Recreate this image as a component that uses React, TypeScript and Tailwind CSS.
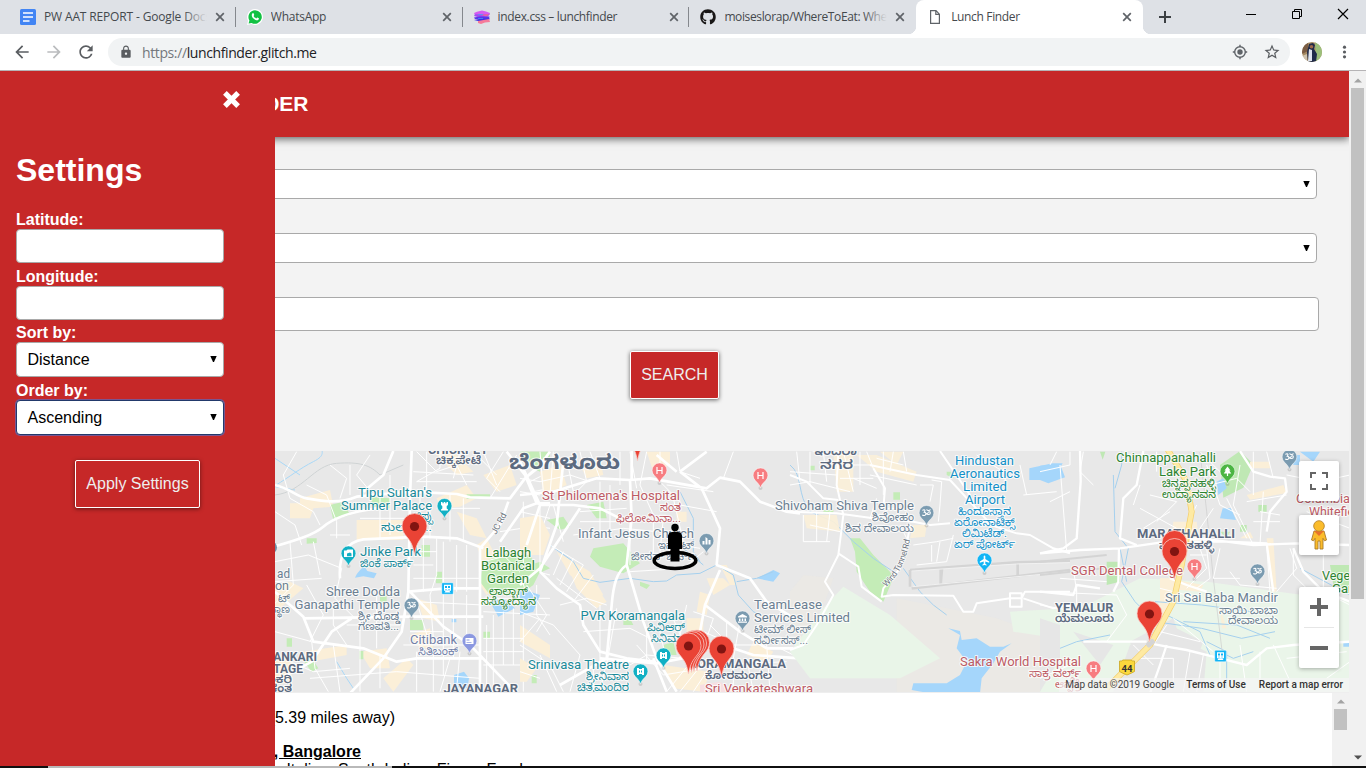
import React from "react";
import { FaGithub } from "react-icons/fa";
import { MdArrowBack, MdArrowForward, MdRefresh, MdLock, MdStarBorder } from "react-icons/md";

const UI = "font-['Open_Sans','Noto_Sans',sans-serif]";

function CloseX() {
  return (
    <svg className="h-[10px] w-[10px] shrink-0" viewBox="0 0 10 10">
      <path d="M1.2 1.2 8.8 8.8M8.8 1.2 1.2 8.8" stroke="#5f6368" strokeWidth="1.7" />
    </svg>
  );
}

function DocsIcon() {
  return (
    <svg className="h-4 w-4" viewBox="0 0 16 16">
      <rect width="16" height="16" rx="1.5" fill="#4285f4" />
      <path d="M3 4h10M3 8h10M3 12h6.500" stroke="#fff" strokeWidth="1.7" />
    </svg>
  );
}

function WhatsIcon() {
  return (
    <svg className="h-4 w-4" viewBox="0 0 16 16">
      <path d="M8 0a8 8 0 1 1-3.700 15.100L0 16l1-4.200A8 8 0 0 1 8 0Z" fill="#fff" />
      <path d="M8 1.200a6.800 6.800 0 1 1-3.400 12.700L1.600 14.500l.8-3A6.800 6.800 0 0 1 8 1.200Z" fill="#12c143" />
      <path d="M5.600 4.300c.5-.4.9-.2 1.100.3l.5 1.200c.1.400-.5.900-.6 1.100.6 1.300 1.500 2 2.700 2.500.3-.2.700-1 1.100-.9l1.400.7c.5.300-.1 1.400-.6 1.800-1.200.8-3.200 0-4.700-1.400C4.900 8 4 5.700 5.600 4.300Z" fill="#fff" />
    </svg>
  );
}

function GlitchIcon() {
  return (
    <svg className="h-4 w-4" viewBox="0 0 16 16">
      <path d="M0 4l3-1.200L8 1.500l4 1 4 1.500-.5 2H1Z" fill="#d65cf0" />
      <path d="M1 5.200h14.500L14 7.500 5 8.500 0 7Z" fill="#a04df0" />
      <path d="M6 5.800l9-.8-2 2.500Z" fill="#f0629c" />
      <path d="M0 8.500l6-1 9.500 0L15 10H1Z" fill="#5a35ea" />
      <path d="M0 11l5-1 11-.5-2 2.500H4Z" fill="#4030e0" />
      <path d="M4 12l11-2 1 3-5 .5-4 1.500-3-1Z" fill="#f57a9a" />
      <path d="M4 5.500h5M4 9.500h5" stroke="#2fb4ff" strokeWidth=".6" />
    </svg>
  );
}

function FileIcon() {
  return (
    <svg className="ml-[2px] h-4 w-3" viewBox="0 0 12 16">
      <path d="M1.600 1.600h5.400l3.400 3.600v9.200H1.600Z M6.800 1.600v3.800h3.600" fill="none" stroke="#5f6368" strokeWidth="1.200" />
    </svg>
  );
}

interface TabProps {
  icon: React.ReactNode;
  title: string;
  sep?: boolean;
  active?: boolean;
  fade?: boolean;
  spacing: string;
}

function Tab({ icon, title, sep, active, fade, spacing }: TabProps) {
  return (
    <div className={"relative flex h-[34px] w-[226.8px] shrink-0 items-center pl-[11px] " + (active ? "rounded-t-lg bg-white" : "")}>
      {sep && <div className="absolute left-[-1px] top-[7px] h-[20px] w-px bg-[#85888d]" />}
      {active && (
        <>
          <div className="absolute bottom-0 left-[-8px] h-2 w-2 bg-[radial-gradient(circle_at_0_0,#dee1e6_8px,#fff_8.500px)]" />
          <div className="absolute bottom-0 right-[-8px] h-2 w-2 bg-[radial-gradient(circle_at_100%_0,#dee1e6_8px,#fff_8.500px)]" />
        </>
      )}
      <div className="flex w-6 shrink-0">{icon}</div>
      <div className="relative w-[163px] shrink-0 overflow-hidden">
        <div className={"whitespace-nowrap text-[12px] leading-4 text-[#45494d] " + spacing}>{title}</div>
        {fade && <div className="absolute right-0 top-0 h-4 w-6 bg-linear-to-r from-[#dee1e600] to-[#dee1e6]" />}
      </div>
      <div className="ml-[8px] flex"><CloseX /></div>
    </div>
  );
}

function Select({ label, className }: { label?: string; className: string }) {
  return (
    <div className={"flex items-center justify-between rounded border bg-white pl-[10.500px] text-[16px] text-black " + className}>
      <span>{label}</span>
      <svg className="mb-[1px] h-[6px] w-[7px] shrink-0" viewBox="0 0 7 6"><path d="M.3 0h6.400L4 6H3Z" fill="#000" /></svg>
    </div>
  );
}

/* ---------- map ---------- */

type Label = [string, number, number, number, string, number, number?];

const GRAY = "#6b7f92";
const BOLD = "#5d6b80";
const RED = "#bd5b65";
const TEAL = "#1a8a99";
const GREEN = "#2c8330";
const BLUE = "#1390c8";
const VIO = "#7180a8";

/* text, left, right, baseline, colour, size, weight */
const labels: Label[] = [
  ["CHICKPET", 428, 488, 454, BOLD, 12, 700],
  ["ಚಿಕ್ಕಪೇಟೆ", 436, 481, 464, BOLD, 11, 600],
  ["ಬೆಂಗಳೂರು", 509, 620, 469, BOLD, 20, 700],
  ["Tipu Sultan's", 358, 432, 497, TEAL, 13],
  ["Summer Palace", 341, 432, 510, TEAL, 13],
  ["ಟಿಪ್ಪು", 413, 433, 520, TEAL, 11],
  ["ಸುಲ್ತಾನ...", 381, 432, 531, TEAL, 11],
  ["Jinke Park", 360, 421, 556, TEAL, 13],
  ["ಜಿಂಕೆ ಪಾರ್ಕ್", 360, 413, 567, TEAL, 11],
  ["ad", 277, 290, 578, GRAY, 13],
  ["on", 275, 289, 590, GRAY, 13],
  ["ಟ್", 278, 290, 602, GRAY, 11],
  ["ಸ್ಥಾಣ", 269, 290, 613, GRAY, 11],
  ["Shree Dodda", 326, 400, 596, GRAY, 13],
  ["Ganapathi Temple", 294.500, 400, 609, GRAY, 13],
  ["ಶ್ರೀ ದೊಡ್ಡ", 358, 400, 620, GRAY, 11],
  ["ಗಣಪತಿ...", 358, 399, 630, GRAY, 11],
  ["Citibank", 410, 457, 644, VIO, 13],
  ["ಸಿತಿಬಂಕ್", 418, 458, 655, VIO, 11],
  ["SHANKARI", 257, 317, 660.500, BOLD, 12, 700],
  ["COTTAGE", 250, 303, 672.500, BOLD, 12, 700],
  ["ಶಂಕರಿ", 260, 292, 683, BOLD, 11, 600],
  ["ಕಂತ", 270, 292, 692, BOLD, 11, 600],
  ["JAYANAGAR", 443.500, 518, 693, BOLD, 12, 700],
  ["Lalbagh", 485.500, 531, 557, GREEN, 13],
  ["Botanical", 481, 535, 570, GREEN, 13],
  ["Garden", 487, 529, 583, GREEN, 13],
  ["ಲಾಲ್ಬಾಗ್", 489, 528, 595, GREEN, 11],
  ["ಸಸ್ಯೋದ್ಯಾನ", 481, 536, 605, GREEN, 11],
  ["St Philomena's Hospital", 542, 680, 500, RED, 13],
  ["ಸಂತ", 660, 681, 511, RED, 11],
  ["ಫಿಲೋಮಿನಾ...", 616, 681, 522, RED, 11],
  ["Infant Jesus Church", 578, 694, 538, GRAY, 13],
  ["ಇನ್ಫಂಟ್", 658, 694, 549, GRAY, 11],
  ["ಜೀಸಸ್ ಚರ್ಚ್", 631, 694, 560, GRAY, 11],
  ["PVR Koramangala", 580.500, 685, 620, TEAL, 13],
  ["ಪಿವಿಆರ್", 647, 685, 631, TEAL, 11],
  ["ಸಿನಿಮಾ", 651, 685, 642, TEAL, 11],
  ["Srinivasa Theatre", 528, 629, 669, TEAL, 13],
  ["ಶ್ರೀನಿವಾಸ", 586, 629, 680, TEAL, 11],
  ["ಚಿತ್ರಮಂದಿರ", 577, 629, 691, TEAL, 11],
  ["KORAMANGALA", 689, 786, 668, BOLD, 12, 700],
  ["ಕೋರಮಂಗಲ", 705, 772, 679, BOLD, 11, 600],
  ["Sri Venkateshwara", 705, 813, 693, RED, 13],
  ["TeamLease", 754, 822, 609, GRAY, 13],
  ["Services Limited", 754, 850, 622, GRAY, 13],
  ["ಟೀಮ್ ಲೀಸ್", 754, 811, 633, GRAY, 11],
  ["ಸರ್ವೀಸಸ್...", 754, 808, 644, GRAY, 11],
  ["ಇಂದಿರಾ", 813, 857, 455, BOLD, 13, 600],
  ["ನಗರ", 820, 853, 469, BOLD, 13, 600],
  ["Shivoham Shiva Temple", 775, 914, 509.500, GRAY, 13],
  ["ಶಿವೋಹಂ", 872, 914, 521, GRAY, 11],
  ["ಶಿವ ದೇವಾಲಯ", 845, 914, 532, GRAY, 11],
  ["Hindustan", 955, 1014, 465, BLUE, 13],
  ["Aeronautics", 950, 1020, 478, BLUE, 13],
  ["Limited", 963, 1007, 491, BLUE, 13],
  ["Airport", 965, 1005, 504, BLUE, 13],
  ["ಹಿಂದೂಸ್ತಾನ", 958, 1011, 515, BLUE, 11],
  ["ಏರೋನಾಟಿಕ್ಸ್", 954, 1015, 526, BLUE, 11],
  ["ಲಿಮಿಟೆಡ್.", 962, 1007, 537, BLUE, 11],
  ["ಏರ್ ಪೋರ್ಟ್", 954, 1015, 548, BLUE, 11],
  ["Sakra World Hospital", 960, 1081, 665.500, RED, 13],
  ["ಸಾಕ್ರ ವರ್ಲ್ಡ್", 1029, 1081, 677, RED, 11],
  ["ಆಸ್ಪತ್ರೆ", 1055, 1081, 688, RED, 11],
  ["Chinnappanahalli", 1116, 1216, 462, GREEN, 13],
  ["Lake Park", 1159, 1216, 476, GREEN, 13],
  ["ಚಿನ್ನಪ್ಪನಹಳ್ಳಿ", 1162, 1216, 487, GREEN, 11],
  ["ಉದ್ಯಾನವನ", 1162, 1216, 498, GREEN, 11],
  ["MARATHAHALLI", 1137, 1235, 538, BOLD, 12, 700],
  ["ಮಾರತಹಳ್ಳಿ", 1159, 1214, 549, BOLD, 11, 600],
  ["SGR Dental College", 1071, 1183, 575, RED, 13],
  ["Columbia", 1296, 1350, 503, RED, 13],
  ["Whitefield", 1309, 1364, 516, RED, 13],
  ["Vegeta", 1322, 1361, 580, GREEN, 13],
  ["Garden", 1332, 1374, 593, GREEN, 13],
  ["Sri Sai Baba Mandir", 1165, 1278, 602, GRAY, 13],
  ["ಸಾಯಿ ಬಾಬಾ", 1219, 1278, 614, GRAY, 11],
  ["ದೇವಾಲಯ", 1228, 1278, 624, GRAY, 11],
  ["YEMALUR", 1055, 1113.500, 611.500, BOLD, 12, 700],
  ["ಯೆಮಲೂರು", 1055, 1114, 622, BOLD, 11, 600],
];

function MapText({ l }: { l: Label }) {
  const [t, x1, x2, y, fill, size, weight] = l;
  return (
    <text x={x1} y={y} textLength={x2 - x1} lengthAdjust="spacingAndGlyphs" fill={fill} fontSize={size} fontWeight={weight ?? 400}
      stroke="#fff" strokeWidth="2.200" strokeOpacity=".75" strokeLinejoin="round" paintOrder="stroke">{t}</text>
  );
}

function RedPin({ x, y }: { x: number; y: number }) {
  return (
    <g transform={`translate(${x} ${y})`}>
      <path d="M0 0C-1.500-8-3-12-7.500-17.500C-10.500-21-12.500-24-12.500-28.500A12.500 12.500 0 0 1 12.500-28.500C12.500-24 10.500-21 7.500-17.500C3-12 1.500-8 0 0Z" fill="#ea4335" stroke="#f9cdc8" strokeWidth=".8" />
      <circle cy="-28" r="4.600" fill="#811411" />
    </g>
  );
}

function Poi({ x, y, c, kind }: { x: number; y: number; c: string; kind: string }) {
  return (
    <g transform={`translate(${x} ${y})`}>
      <circle cx="0" cy="12.500" r="2" fill="#000" opacity=".12" />
      <path d="M0 12.500C-.8 9.500-2.500 7.800-5 5.300A7.400 7.400 0 1 1 5 5.300C2.500 7.800.8 9.500 0 12.500Z" fill={c} stroke="#fff" strokeWidth=".5" />
      {kind === "H" && <path d="M-2.500-3.500V3.500M2.500-3.500V3.500M-2.500 0H2.500" stroke="#fff" strokeWidth="1.200" fill="none" />}
      {kind === "castle" && <path d="M-3.500-4h1.500v1.200h1.200V-4H.8v1.200H2V-4h1.500V-1L2.200 0V2.500l1.300 1v1h-7v-1l1.300-1V0L-3.500-1Z" fill="#fff" />}
      {kind === "cam" && <path d="M-4.500-3H-2l1-1H4.500V3.500H-4.500ZM-1.500 0V2.800H3V0L1.500-1Z" fill="#fff" fillRule="evenodd" />}
      {kind === "om" && <path d="M-4-2.500C-2.500-4-.5-3-2.200-.8C1-.5-1 4-4.200 2M-1 0C1 2 3.800 2 3.800 0S1.500-1.500 1 1M0-3.500C1-2.200 3-2.200 4-3.500" stroke="#fff" strokeWidth="1.100" fill="none" />}
      {kind === "card" && <path d="M-4-3H4V3H-4ZM-3-1.500H0v1h-3ZM-3 1H2v.8h-5Z" fill="#fff" fillRule="evenodd" />}
      {kind === "film" && <path d="M-3.500-3.500h2v1h3v-1h2v7h-2v-1h-3v1h-2ZM-1.500-1V1h1V-1ZM.5-1V1h1V-1Z" fill="#fff" fillRule="evenodd" />}
      {kind === "city" && <path d="M-4 3.500V0h2v3.500ZM-1 3.500V-4L1-2.500v6ZM2 3.500V-1h2v4.500Z" fill="#fff" />}
      {kind === "bank" && <path d="M-4.500-2 0-4.500 4.500-2v1h-9ZM-3.500 0h1.500v2.500h-1.500ZM-.7 0h1.400v2.500H-.7ZM2 0h1.500v2.500H2ZM-4.500 3h9v1.300h-9Z" fill="#fff" />}
      {kind === "tree" && <path d="M0-5 3-1H1.700L3.800 2H.6v2.500H-.6V2h-3.200l2.100-3H-3Z" fill="#fff" />}
      {kind === "plane" && <path d="M-.8-4.500Q0-5.500.8-4.500V-1.500L4.700 1v1.200L.8 1v2.200l1.300 1v.9L0 4.500l-2.100.6v-.9l1.300-1V1l-3.900 1.200V1l3.900-2.500Z" fill="#fff" />}
    </g>
  );
}

function Train({ x, y }: { x: number; y: number }) {
  return (
    <g transform={`translate(${x - 5.500} ${y - 5.500})`}>
      <rect x="-.3" y="-.3" width="11.600" height="11.600" rx="1" fill="#12b5f5" stroke="#fff" strokeWidth=".5" />
      <path d="M2 1.800h7v6h-7ZM3 3v2h2V3ZM6 3v2h2V3ZM3.500 6v1h1V6ZM6.500 6v1h1V6ZM2.500 9.500l1-1.500h4l1 1.500" fill="#fff" fillRule="evenodd" />
    </g>
  );
}

function CityMap() {
  return (
    <svg className="block h-[241px] w-[1349px]" viewBox="0 451 1349 241" fontFamily="Roboto, 'Noto Sans', 'Noto Sans Kannada', sans-serif">
      <rect y="451" width="1349" height="241" fill="#e8e8e8" />

      {/* west */}
      <g transform="translate(270 445) scale(.33333)" fill="none" strokeLinejoin="round">
        <path d="M90 160l90-25 10 50-60 5-10 30-60 0 0-45 30 0ZM260 225h140v60H260ZM500 160l90-40 30 40-50 25-60 5ZM0 430l60-20 40 20-70 60H0ZM640 90l80-30 20 60-60 20ZM440 460l60 20 10 50-50-10ZM490 20l60 0 60 60-50 10ZM100 620l130-20 0 30-110 20ZM630 420l60-30 20 20-60 40ZM750 540l90 60v40l-90-50ZM560 200l60 20 30 60-50-10ZM270 620l80-10 10 60-60 0ZM420 570l60-20 10 60-40 0ZM340 700l70-60 20 20-60 80ZM620 300l30-20 30 60-40 20ZM15 640l50 10 0 60-50 10Z" fill="#fbefd8" />
        <path d="M640 350l80-30 60 10 30 50-20 40-40 30-90 0-30-40ZM180 180l40-10 20 40-50 15ZM455 300h25v35h-25ZM420 525h40v30h-40ZM498 380h18v35h-18ZM110 280l30 0 0 14-30 2ZM268 618h12v25h-12ZM330 445h20v30h-20ZM640 560h20v20h-20ZM780 20l60 0v30l-40-10ZM300 155l60 5 0 30-50-5ZM590 148h70v14h-70ZM95 640l30 0 20 30-20 10ZM50 580h16v25H50ZM755 20h20v12h-20Z" fill="#c4ecb7" />
        <path d="M255 398C262 380 275 372 282 362L292 378 320 385 312 400 280 394ZM660 470l40-10 35 30-50 25ZM552 690l30-10 15 20-5 30-40-5ZM545 522h14v10h-14Z" fill="#a5d6fb" />
        <path d="M15 122C60 95 90 70 130 50S150 20 160 10M15 40L90 90M15 125l60 10M200 650l30 50 20 30" stroke="#a9d8f7" strokeWidth="3" />
        <path d="M15 150C100 140 130 60 200 55S300 60 330 90L400 60" stroke="#cfd3d4" strokeWidth="3" />
        <g stroke="#fff" strokeWidth="3">
          <path d="M80 20L40 90 60 160 130 200 150 240M110 120l60 30 30 80 0 50M15 200l60 40 20 60M180 60l50 40-20 60M240 60v90M300 30l-40 60 50 60M330 150v130M360 90v180M270 220h140M240 270h-60M130 290l20 100M60 290l10 130-60 60M15 350l100-20 100 40-20 90 60 60M15 410l140-10M110 420l50 90-40 80M190 470l0 70 40 60M270 480l0 130M320 450v160M230 540h160M15 560l110 30 10 80 40 70M60 650l70 30 110-10M190 600l20 140M270 610v130M330 630v100M120 700l260-20M440 20l60 60 60-20 30 60M470 20v120M510 20v50l-70 40M570 20l-20 80M430 80l180 10M440 110h180M450 150v120M480 170v110M500 190h130M540 150v140M580 160v130M430 320h70M430 360h60M460 280v160M500 280v110l-20 60M430 400h200M520 290v150M560 300v140M590 300v140M430 470l210 10M440 470l40 130M480 450l10 130M550 440v200M590 450v130M520 400v290M400 600h230M420 560h100M380 680l250 20M440 620v120M490 620v120M540 640l-30 100M570 620l-10 110M640 460h200M640 500l200 10M650 540v200M670 510v230M700 500v160M730 490v170M760 480v260M640 580h120M640 620h120M640 660h200M800 420v90l40 60M640 350l80-20M700 20l-50 80 40 40M620 30l60 60M640 20l40 100M740 30l-80 130M780 110l60-30M790 140l50-10M765 240l75 10M690 260l130-20 20-60M760 170v200l80 20M690 320l60 60 30 110" />
        </g>
        <g stroke="#fff" strokeWidth="8">
          <path d="M15 304C80 285 130 270 160 245S230 205 290 195L350 185M15 120C60 130 80 155 110 160S200 180 260 155L420 140L560 147L600 157L720 160L765 100L840 40M370 18L340 90L280 140M425 18L420 160 415 440 395 560 340 640 240 745M210 400C205 330 230 290 280 283L460 275 560 280 640 310M710 20L765 90 800 175 760 190 690 290M715 170L690 240L630 310V745M15 440L100 515L130 590L280 610L380 650L440 640L640 640M100 520L420 515H640M415 440L530 430H630M420 440L520 545L600 600L740 745M765 100L810 60 840 20M800 175h40M15 710l110-60 60-90 60-40" />
        </g>
      </g>

      {/* centre */}
      <g transform="translate(520 445) scale(.33333)" fill="none" strokeLinejoin="round">
        <path d="M0 220l60-10 30 60-20 60H0ZM150 380l60 20 50 70-30 20-60-60ZM60 80l60-20 20 60-70 30ZM110 320l100 60 40 70-20 10-80-70ZM560 400l50 0 20 20-50 30ZM430 660l140 20-20 60-90-10ZM540 440l30 10-10 60-30-10ZM380 20l70 0 0 40-50 20ZM470 200l30 0 0 30-30 0ZM500 520l50 0 0 60-50-10ZM0 640l50 30-30 40H0ZM700 590l60 30-20 30-60-20ZM600 360l20 0 30 60-20 0ZM180 60l60-20 10 50-50 10Z" fill="#fbefd8" />
        <path d="M220 310l90-15 50 60-50 30-70-20-30-30ZM80 225l50-10 20 30-30 10ZM200 180l50-10 10 50-30 0ZM0 370l60-20 30 20-90 40ZM0 20l60 0v60L20 60ZM430 600l30-10 10 40-30 0ZM310 520l20 0 10 20-30 0ZM360 410l30 10-10 12-20-10ZM35 690l15 0 0 25-15 0Z" fill="#c4ecb7" />
        <path d="M0 430l60 20L40 500 0 510ZM710 400l50-25 20 10-20 25Z" fill="#a5d6fb" />
        <path d="M90 300L160 350 190 400 240 412 330 400 400 410 440 408 470 390 540 385 590 360 640 390 655 450 700 500 720 510M480 140l40 80 0 100 20 30M490 310l60 50M650 410l60-10 50-20" stroke="#a5d0ee" strokeWidth="3" />
        <path d="M540 720l60-10 60 40H540Z" fill="#f7dfe2" />
        <g stroke="#fff" strokeWidth="3">
          <path d="M0 100l60 10 90-20 60 20M60 20l10 120M100 20l-10 130M140 40l20 100M0 140l60 10M60 180v200M100 180l30 110M0 200l90 20M180 20l20 90-50 50M210 20l30 80M240 110v160M270 120v160M300 20v100M330 20l20 110M380 20l-20 100 40 90M420 20v90l60 60M470 20l10 60 60 20M180 200l140-10M180 230h150M160 270l150-20 100 10M400 210v120M430 220l-10 100M460 160l30 130M480 180l110 20M330 220v140M90 300l100 60M130 320l-30 70M160 340l-40 80M190 360l-50 80M220 390l-60 80M110 400l120 90M20 420l60 90-30 50M0 500l100 40 80 90M60 520l-60 70M120 480l80-20 60 20M190 560l140-10 60 30M240 480v170M290 490l-30 170M180 630l-30 110M220 650v90M260 650l-20 90M60 630l50 110M0 600l90 60 40 80M330 660l50-30 110 10M350 600l80 90M380 560v90M420 560l20 90M450 500l40 90M500 480l-20 90 60 60M520 500l60 20-30 90M550 560l70 30M430 690l120-20M440 740l90-110M480 740l80-100M520 740l60-90M570 540l60 60 80 0M620 530v130M660 530l-20 110M680 640l20 100M600 660l200-10M640 740l0-90M740 600l10 140M780 610l60 30M0 680l60 20M0 40l50 30M480 300l60 10M330 380l160-10 60-50M440 120l140 20M640 20l-30 80" />
        </g>
        <g stroke="#fff" strokeWidth="8">
          <path d="M0 50L60 180H160L240 190 300 220M60 180L20 300M0 150L100 140 230 100 330 105 390 100 560 130 600 98 660 110 720 170 800 200 840 205M330 105L335 220 320 360 370 530 410 640 470 740M480 80L545 130 600 250 590 360 690 400 740 470 840 530M480 80L560 20M470 80L410 30M130 50L110 240 60 380M0 420l60-50 120-180M60 380L110 430 180 480 190 540 240 620 320 640 400 650M320 360C290 380 280 420 275 480L260 640 120 720M600 375L555 480 660 560 740 610M555 480L540 560 480 640M610 600L700 630 840 640M240 640L410 655 540 630M335 18v90M400 640L440 740M740 610H840" />
        </g>
      </g>

      {/* east centre */}
      <g transform="translate(790 445) scale(.33333)" fill="none" strokeLinejoin="round">
        <path d="M40 390l90 10L105 470 30 580 0 560V440ZM320 460l300 60 170 60 50 60v110H320Z" fill="#ebe8e4" opacity=".8" />
        <path d="M160 425L300 510 450 640 330 700 60 700 0 620 100 490ZM660 500l180-10v260H770l0-110 30-60-130-20Z" fill="#e9f5e8" />
        <path d="M180 280l30 0 40 50 50 50 10 20-30 70-40-30-40-60-5-60ZM310 142h20v22h-20ZM60 62h14v14H60ZM470 80l20 0 0 20-20-10ZM100 195l30 0 0 12-30 0Z" fill="#c4ecb7" />
        <path d="M475 550L510 558 515 585 560 580 600 605 640 605 665 595 630 620 610 655 575 700 570 745H420L365 735 370 715 470 715 510 690 530 650 500 610 510 570ZM718 70l70-15 30 0-30 50-70 0Z" fill="#a5d6fb" />
        <path d="M0 60C40 90 20 150 60 200L130 230 190 290 250 340 310 380M340 370L390 440 430 480 470 510M810 640l10-40 20 0" stroke="#a5d0ee" strokeWidth="3" />
        <path d="M40 210l100 0 10 50-100-10ZM370 240l40 0-5 35-45 5ZM130 20h60v120l-50 0ZM200 30h60l120 50-10 30-110-30ZM270 20l70 0-20 40Z" fill="#fbefd8" opacity=".9" />
        <path d="M360 375L680 352 840 348M365 430L840 375M360 375v50M452 370v50l4-50M683 352v40" stroke="#d4d4d4" strokeWidth="8" />
        <path d="M365 378L680 357 840 353M368 425L840 380" stroke="#f1f1f1" strokeWidth="3" />
        <g stroke="#fff" strokeWidth="3">
          <path d="M20 20l10 90M60 20v100M100 20l10 90M0 80l140 10M0 120l60-10 120 30M160 20l30 120M190 100l70 30M210 20v100M230 20l20 50M150 60h90M150 100h100M280 20v130M310 20l-10 60M340 20l10 60M260 40l80 20M240 90l140 30M390 120l40 0-10 50M425 105l30 5-5 70M450 180l-5 50M40 210v80h80M80 200v90M60 240l90 20M120 200l-10 90M240 220l20-60M290 190h40M330 240l30 60M370 300l70-10 50-10M425 300v50M450 290l-10 60M490 270l-20 80M470 350l-90 10M640 70l10 60M690 60l20 90M560 30l80 50M800 20l-30 60M780 170l60-30M700 150l100-10" />
        </g>
        <g stroke="#fff" strokeWidth="6">
          <path d="M0 200L140 205 250 220 370 230 420 240 480 235M145 18L140 120 160 210 145 330 105 410 130 450 80 540 40 600 0 615M0 90L50 110 100 160 145 165M240 60L380 90 480 105 600 235M250 70L285 130 280 190M450 18L540 150M360 240L350 300 330 370 280 430 275 455 310 450 490 452 520 500 550 500 560 475 660 460 695 460 705 440 840 440M680 265L720 270 790 310 840 325M660 445h35v40h-35ZM700 460l90 30 50-10M570 230L680 265M145 325l30 20 30 20 10 60 60 45" />
        </g>
      </g>

      {/* east */}
      <g transform="translate(1040 445) scale(.33333)" fill="none" strokeLinejoin="round">
        <path d="M0 600L100 500 300 400 500 410 930 470V745H0Z" fill="#eaf5e9" />
        <path d="M0 520l60 20 0 100-60 100ZM270 600l120-60 100 50-60 150H220ZM100 560l120 40-40 60Z" fill="#e6e6e6" />
        <path d="M270 590l130-70 20 60 80 40-10 120h-110l-30-70-60-10Z" fill="#e6e6e6" />
        <path d="M540 60l60-42 40 40-30 70-60 30ZM200 350l40 0 0 60-40 10ZM870 360l60 0v80l-50-20ZM540 260l30 0-10 20ZM600 240l20 0 0 20-20 0ZM655 180l25 0 0 20-25 0ZM180 20l16 0-8 24Z" fill="#bfe8b4" />
        <path d="M0 62l60-5 15 40-50 18-25-10ZM548 190l25 0 15 35-48-5ZM530 110l20-10 10 30-25 20ZM780 20l60 0-20 30ZM910 590h20v15h-20ZM760 30h20v30h-20Z" fill="#a5d6fb" />
        <path d="M620 150l110-30 10 24-110 20ZM380 400l110 20-10 20-120-10ZM400 230l70 0 10 80-90 10ZM680 280l20 0 10 160-15 0ZM630 50l60 0 0 20-60 0ZM540 490l20 60-14 0ZM360 400l40 0-10 90-30 30ZM600 280l30-20 10 20Z" fill="#fbefd8" />
        <path d="M220 90l5 170 40 50-20 100 40 60 60 60 140 20 120 30 100-20M60 610l50-20 100-20M380 510l100 50 30 70M540 620l40 20 60-20M430 530l160 10 100 40M500 590l60 30 0 110M780 370l150 80M225 130l20-70 0-40M240 310l20 100M345 470l140 10 150 20" stroke="#a5d0ee" strokeWidth="3" />
        <path d="M480 20L500 200 520 400 550 650" stroke="#ccc" strokeWidth="2" />
        <path d="M0 350l200-20M0 390l190-20" stroke="#d4d4d4" strokeWidth="6" />
        <g stroke="#fff" strokeWidth="3">
          <path d="M90 20l0 40-90 20M60 60l20 260M130 20l-10 60 40 40M300 120l-20 60M330 150l80 20-60 60M350 20v60M300 190l110 60M310 250l80-50M480 20l60 60M500 60l40 120 60 30M510 120l80-20 40 40M520 190l-40 60M560 160l60 120M600 60l-20 120 60 120M640 20v130M670 140l-10 160M620 170l120-20M660 200l60 10M640 230l80 0M470 180l-30 60M480 310l20 60-60 60M500 310l10 90-40 30M540 310l-20 90M570 380l30 40 110 10M680 300l10 140M450 330h50M520 400h80M360 430l120 30M750 310l20 60-60 70M800 200l130 50M740 90l100 20 90-20M680 20l20 80M760 310l0 80 60 60M850 300v140l80 40M60 400l140 10M100 370l10 70M0 440l230 10M230 450l30 60-60 80M280 600l60 60M300 640l100 0 0 80M340 600l40-60M400 520l120 100M450 620l-20 120M490 630l-20 110M540 650l0 90M600 600l20 140M660 620v90l120 10M360 560l120 30M700 600l60 130M860 700l70-50M0 480l110 20M110 420v80M0 700l90-40M740 640l180-20" />
        </g>
        <path d="M120 18L122 110 110 280 70 310 0 325M0 325L120 315 240 310 380 290 480 280 560 290 640 300 770 295 930 300M310 18L290 120 250 160 240 280 290 300M237 310L235 410 220 440M600 18L640 80 690 95 735 100 740 140 690 200 680 260M460 290L560 290 680 295 700 440M760 310L790 380 850 440 930 470M0 440L100 450 110 420 180 430M330 595L380 605 440 615 540 640 620 660 680 610 760 600 930 590M380 600L360 660 330 745M130 590L320 590M390 400L440 420 500 440" stroke="#fff" strokeWidth="7" />
        <path d="M375 0L440 110 455 200 425 360 400 470 330 600 200 730" stroke="#f5cf6b" strokeWidth="18" />
        <path d="M375 0L440 110 455 200 425 360 400 470 330 600 200 730" stroke="#feeaa3" strokeWidth="14" />
        <rect x="318" y="588" width="28" height="16" rx="5" fill="#d5d5d5" transform="rotate(-40 330 596)" />
      </g>

      <circle cx="271" cy="547.500" r="6" fill="#6f8ea6" />
      {labels.map((l, i) => <MapText key={i} l={l} />)}
      <text transform="translate(496 535) rotate(-62)" textLength="23" fontSize="9" fill="#6d7580" stroke="#fff" strokeWidth="1.500" strokeOpacity=".7" paintOrder="stroke">JC Rd</text>
      <path id="windTunnel" d="M886 587Q904 572 910 540" fill="none" />
      <text fontSize="8.500" fill="#6d7580" stroke="#fff" strokeWidth="1.500" strokeOpacity=".7" paintOrder="stroke"><textPath href="#windTunnel" textLength="54">Wind Tunnel Rd</textPath></text>

      <Poi x={444.500} y={506} c="#12b0c4" kind="castle" />
      <Poi x={348.500} y={553.500} c="#12b0c4" kind="cam" />
      <Poi x={411.500} y={605.500} c="#7b9bb0" kind="om" />
      <Poi x={469.500} y={641} c="#8b98e0" kind="card" />
      <Poi x={659.500} y={470.500} c="#f77c80" kind="H" />
      <Poi x={760.500} y={475.500} c="#f77c80" kind="H" />
      <Poi x={706.500} y={541} c="#7b9bb0" kind="city" />
      <Poi x={742.500} y={618.500} c="#7b9bb0" kind="bank" />
      <Poi x={663.500} y={655.500} c="#12b0c4" kind="film" />
      <Poi x={640.500} y={671.500} c="#12b0c4" kind="film" />
      <Poi x={926.500} y={513} c="#7b9bb0" kind="om" />
      <Poi x={984.500} y={560.500} c="#12b5f5" kind="plane" />
      <Poi x={1227.500} y={471.500} c="#4bb543" kind="tree" />
      <Poi x={1289.500} y={457} c="#7b9bb0" kind="om" />
      <Poi x={1257.500} y={571.500} c="#7b9bb0" kind="om" />
      <Poi x={1194.500} y={566.500} c="#f77c80" kind="H" />
      <Poi x={1093.500} y={668.500} c="#f77c80" kind="H" />
      <Train x={447.500} y={588.500} />
      <Train x={1220.500} y={656} />
      <path d="M1119.500 661q2 .5 3.500-1h8q1.500 1.500 3.500 1v10.500q-2.500 1.500-7.500 3.500q-5-2-7.500-3.500Z" fill="#fbd83c" stroke="#c9a521" strokeWidth=".8" />
      <text x="1127" y="671.500" fontSize="9.500" fontWeight="700" textAnchor="middle" fill="#333">44</text>

      <RedPin x={637.500} y={461} />
      <RedPin x={414.500} y={554.500} />
      <RedPin x={697} y={671} />
      <RedPin x={694} y={671.500} />
      <RedPin x={691.500} y={672.500} />
      <RedPin x={688.500} y={674} />
      <RedPin x={721.500} y={677} />
      <RedPin x={1174.500} y={571.500} />
      <RedPin x={1174.500} y={579.500} />
      <RedPin x={1149.500} y={642} />

      <ellipse cx="675" cy="560.500" rx="20.800" ry="8" fill="none" stroke="#000" strokeWidth="3.600" />
      <circle cx="675" cy="527.500" r="3.700" />
      <path d="M669.500 532.500q5.500-1.500 11 0l1.500 3v13.500h-2.500v12.500h-9v-12.500H668v-13.500Z" />
    </svg>
  );
}

function ArrowTri({ up, color }: { up?: boolean; color: string }) {
  return (
    <svg className="h-[5px] w-[8px]" viewBox="0 0 8 5">
      <path d={up ? "M4 0.500 8 4.500H0Z" : "M0 .5H8L4 4.500Z"} fill={color} />
    </svg>
  );
}

export default function App() {
  return (
    <div className="flex h-[768px] w-[1366px] flex-col overflow-hidden bg-white font-['Liberation_Sans',Arial,sans-serif]">
      {/* tab strip */}
      <div className={"flex h-[34px] shrink-0 bg-[#dee1e6] pl-[9px] " + UI}>
        <Tab icon={<DocsIcon />} title="PW AAT REPORT - Google Docs" fade spacing="tracking-[-0.15px]" />
        <Tab icon={<WhatsIcon />} title="WhatsApp" sep spacing="tracking-[-0.25px]" />
        <Tab icon={<GlitchIcon />} title="index.css – lunchfinder" sep spacing="tracking-[-0.35px]" />
        <Tab icon={<FaGithub className="h-4 w-4 text-[#191717]" />} title="moiseslorap/WhereToEat: WhereToEat" sep fade spacing="tracking-[-0.38px]" />
        <Tab icon={<FileIcon />} title="Lunch Finder" active spacing="tracking-[-0.35px]" />
        <div className="flex flex-1 pl-[15px] pt-[10px]">
          <svg className="h-[14px] w-[14px]" viewBox="0 0 14 14"><path d="M7 1v12M1 7h12" stroke="#3c4043" strokeWidth="2" /></svg>
          <svg className="ml-[73px] mt-[-2px] h-[12px] w-[12px]" viewBox="0 0 12 12"><path d="M1 6.500H11" stroke="#000" /></svg>
          <svg className="ml-[34px] mt-[-2px] h-[12px] w-[12px]" viewBox="0 0 12 12"><path d="M1.500 3.500h7v7h-7ZM3.500 3.500v-2h7v7h-2" fill="none" stroke="#000" /></svg>
          <svg className="ml-[34px] mt-[-2px] h-[12px] w-[12px]" viewBox="0 0 12 12"><path d="M1 1 11 11M11 1 1 11" stroke="#000" strokeWidth="1.200" /></svg>
        </div>
      </div>
      {/* toolbar */}
      <div className={"flex h-[37px] shrink-0 items-center border-b border-[#b6b4b6] bg-white pl-3 " + UI}>
        <MdArrowBack className="h-5 w-5 text-[#5a5d61]" />
        <MdArrowForward className="ml-3 h-5 w-5 text-[#babcbe]" />
        <MdRefresh className="ml-3 h-5 w-5 text-[#5a5d61]" />
        <div className="ml-3 flex h-7 w-[1182px] items-center rounded-full bg-[#f1f3f4] pl-[11px] pr-[9px]">
          <MdLock className="h-[14px] w-[14px] text-[#5a5d61]" />
          <div className="ml-[9px] flex-1 text-[14px] tracking-[-0.39px] text-[#202124]"><span className="text-[#74787c]">https://</span>lunchfinder.glitch.me</div>
          <svg className="h-4 w-4" viewBox="0 0 16 16"><circle cx="8" cy="8" r="5.300" fill="none" stroke="#5f6368" strokeWidth="1.400" /><circle cx="8" cy="8" r="2.700" fill="#5f6368" /><path d="M8 .8v2M8 13.200v2M.8 8h2M13.200 8h2" stroke="#5f6368" strokeWidth="1.400" /></svg>
          <MdStarBorder className="ml-[15px] h-[18px] w-[18px] text-[#5a5d61]" />
        </div>
        <svg className="ml-3 h-5 w-5 rounded-full" viewBox="0 0 20 20">
          <rect width="20" height="20" fill="#a58a62" /><path d="M13 0h7v20h-6Z" fill="#9cc07a" /><path d="M0 0h6v9l-6 3Z" fill="#7a5c43" />
          <path d="M7 2l4-1 2 2-1 4 3 5-1 8H6L5 10Z" fill="#1f2b49" /><path d="M7 7l3 1 0 11H6Z" fill="#dfe4ee" /><circle cx="9.500" cy="4.800" r="1.800" fill="#a06a4c" /><path d="M0 14l5-2v8H0Z" fill="#cfc3ae" />
        </svg>
        <svg className="ml-[14px] h-4 w-4" viewBox="0 0 16 16" fill="#5a5d61"><circle cx="8.500" cy="3.200" r="1.600" /><circle cx="8.500" cy="8" r="1.600" /><circle cx="8.500" cy="12.800" r="1.600" /></svg>
      </div>

      {/* page */}
      <div className="relative flex h-[695px] shrink-0">
        <div className="flex w-[1349px] flex-col overflow-hidden bg-[#f3f3f3]">
          <header className="z-10 flex h-[66px] shrink-0 items-center bg-[#c62828] pb-[1px] pl-[151px] text-[21px] font-bold text-white shadow-[0_2px_8px_rgba(0,0,0,0.6)]">
            LUNCH FINDER
          </header>
          <form className="flex h-[314px] shrink-0 flex-col pl-8 pt-8">
            <Select className="h-[30px] w-[1285px] border-[#a9a9a9] pr-[6px]" />
            <Select className="mt-[34px] h-[30px] w-[1285px] border-[#a9a9a9] pr-[6px]" />
            <div className="mt-[34px] h-[34px] w-[1287px] rounded border border-[#a9a9a9] bg-white" />
            <div className="ml-[598px] mt-5 flex h-12 w-[89px] items-center justify-center rounded-[2px] border border-white bg-[#c62828] text-[16px] text-[#eee] shadow-[0_1px_4px_rgba(0,0,0,0.6)]">SEARCH</div>
          </form>
          <div className="relative h-[241px] shrink-0 overflow-hidden">
            <CityMap />
            <div className="absolute right-[10px] top-[10px] flex h-10 w-10 items-center justify-center rounded-[2px] bg-white shadow-[0_1px_4px_rgba(0,0,0,0.3)]">
              <svg className="h-[18px] w-[18px]" viewBox="0 0 18 18"><path d="M1 6V1h5M12 1h5v5M17 12v5h-5M6 17H1v-5" fill="none" stroke="#666" strokeWidth="2" /></svg>
            </div>
            <div className="absolute right-[10px] top-[64px] flex h-10 w-10 items-center justify-center rounded-[2px] bg-white pr-[1px] shadow-[0_1px_4px_rgba(0,0,0,0.3)]">
              <svg className="h-[32px] w-[20px]" viewBox="0 0 20 32">
                <path d="M5 12h10l2.500 9-2 .8-1.500-2.500V30H11V22H9v8H6V19.300L4.500 21.800l-2-.8Z" fill="#fbbc2b" stroke="#a87a2a" strokeWidth=".9" />
                <path d="M5 12h10l-5 5Z" fill="#e8712b" /><circle cx="10" cy="7" r="5.300" fill="#fbbc2b" stroke="#b9862c" strokeWidth=".9" />
              </svg>
            </div>
            <div className="absolute right-[10px] top-[136px] flex h-[81px] w-10 flex-col items-center rounded-[2px] bg-white shadow-[0_1px_4px_rgba(0,0,0,0.3)]">
              <svg className="mt-[11px] h-[18px] w-[18px]" viewBox="0 0 18 18"><path d="M9 0v18M0 9h18" stroke="#666" strokeWidth="4" /></svg>
              <div className="mt-[11px] h-px w-[30px] bg-[#e6e6e6]" />
              <div className="mt-[18px] h-1 w-[18px] bg-[#666]" />
            </div>
            <div className="absolute bottom-0 right-0 flex h-[14px] items-center bg-[#f5f5f5b3] pl-[6px] pr-[6px] font-[Roboto,sans-serif] text-[10px] leading-[14px] text-[#444]">
              <span className="whitespace-nowrap">Map data ©2019 Google</span>
              <span className="ml-[12px] whitespace-nowrap font-medium text-[#333]">Terms of Use</span>
              <span className="ml-[13px] whitespace-nowrap font-medium text-[#333]">Report a map error</span>
            </div>
          </div>
          <div className="flex flex-1 overflow-hidden border-t border-[#eee] bg-white">
            <div className="w-[1332px] text-[16px] leading-[18px] text-black">
              <p className="mt-[16px] w-[395px] whitespace-nowrap text-right">(5.39 miles away)</p>
              <p className="mt-[16px] w-[361px] whitespace-nowrap text-right font-bold underline">Koramangala, Bangalore</p>
              <p className="w-[523px] whitespace-nowrap text-right">Italian, South Indian, Finger Food</p>
            </div>
            <div className="flex w-[17px] flex-col items-center bg-[#f1f1f1] pt-[6px]">
              <ArrowTri up color="#a3a3a3" />
              <div className="mt-[5px] h-[21px] w-[13px] bg-[#c1c1c1]" />
            </div>
          </div>
        </div>
        <div className="flex w-[17px] flex-col items-center bg-[#f1f1f1] pt-[7px]">
          <ArrowTri up color="#a3a3a3" />
          <div className="mt-[5px] h-[511px] w-[13px] bg-[#c1c1c1]" />
          <div className="mb-[6px] mt-auto flex"><ArrowTri color="#505050" /></div>
        </div>

        {/* settings drawer, lies over the page */}
        <aside className="absolute left-0 top-0 z-20 flex h-[695px] w-[275px] flex-col bg-[#c62828] pl-4 text-[16px] text-white">
          <svg className="ml-[206px] mt-[19px] h-[19px] w-[19px] shrink-0" viewBox="0 0 19 19">
            <path d="M2.900 2.900 16.100 16.100M16.100 2.900 2.900 16.100" stroke="#fff" strokeWidth="5.200" />
          </svg>
          <h1 className="mt-[43px] text-[32px] font-bold leading-[36px]">Settings</h1>
          <label className="mt-[23px] font-bold leading-[18px]">Latitude:</label>
          <div className="h-[34px] w-[208px] rounded border border-[#a9a9a9] bg-white" />
          <label className="mt-[5px] font-bold leading-[18px]">Longitude:</label>
          <div className="h-[34px] w-[208px] rounded border border-[#a9a9a9] bg-white" />
          <label className="mt-[4px] font-bold leading-[18px]">Sort by:</label>
          <Select label="Distance" className="h-[35px] w-[208px] border-[#a9a9a9] pr-[6px]" />
          <label className="mt-[5px] font-bold leading-[18px]">Order by:</label>
          <Select label="Ascending" className="h-[35px] w-[208px] border-[#22396b] pr-[6px] shadow-[0_0_0_1px_#7b5590]" />
          <div className="ml-[59px] mt-[25px] flex h-12 w-[125px] items-center justify-center rounded-[2px] border border-white text-[#eee] shadow-[0_1px_4px_rgba(0,0,0,0.5)]">Apply Settings</div>
        </aside>
      </div>
      {/* screen edge */}
      <div className="flex h-[2px] shrink-0 bg-[#101010]">
        <div className="ml-12 h-[2px] w-[344px] bg-[#b9b9b9]" />
      </div>
    </div>
  );
}
